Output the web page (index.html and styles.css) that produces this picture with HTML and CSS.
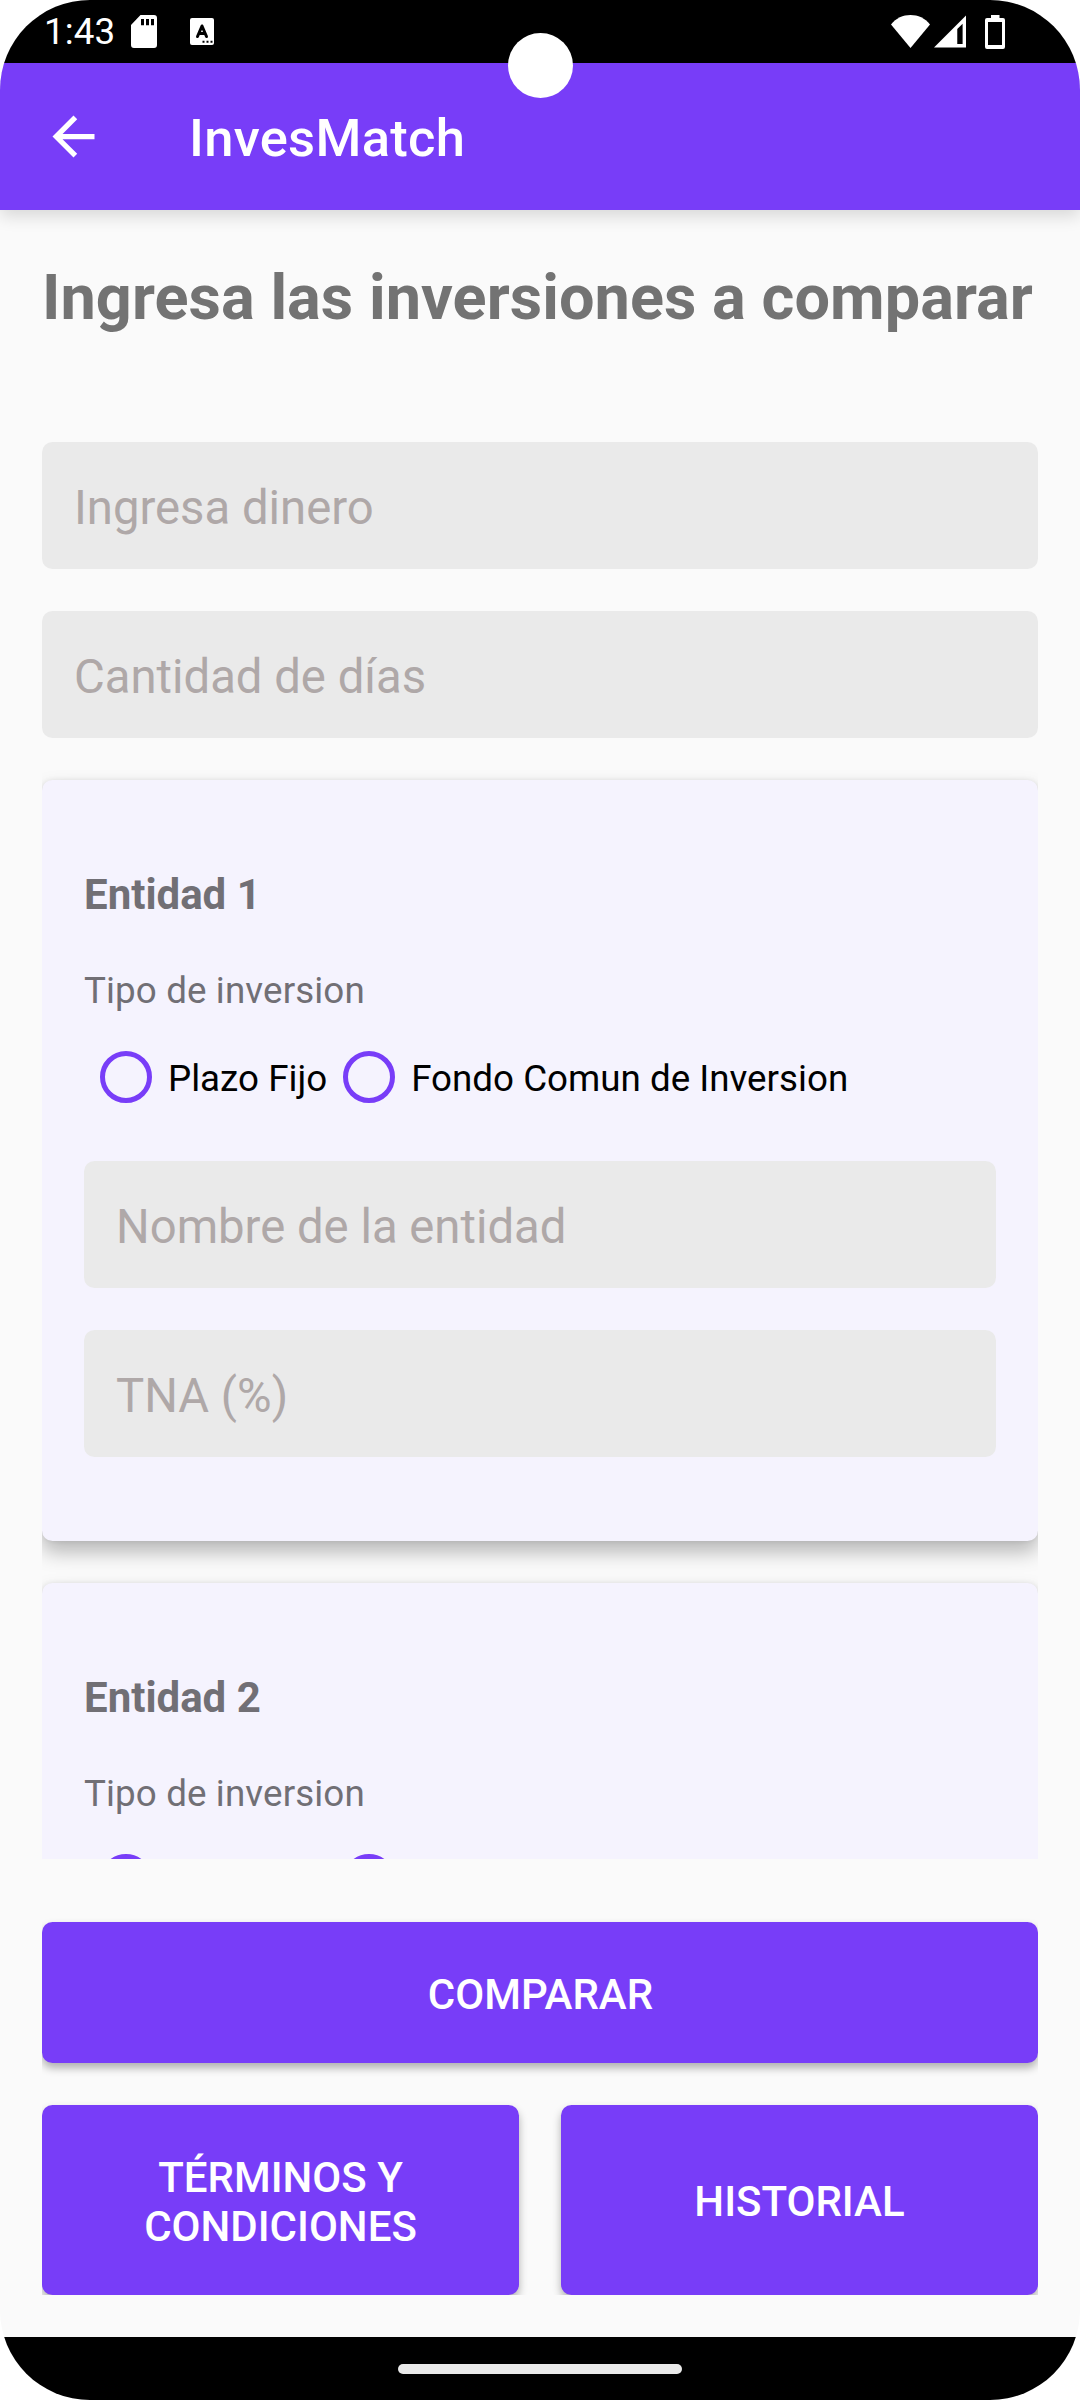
FILE: index.html
```html
<!DOCTYPE html>
<html lang="es">
<head>
<meta charset="utf-8">
<title>InvesMatch</title>
<link rel="stylesheet" href="styles.css">
</head>
<body>
<div class="screen">
  <header class="status-bar">
    <span class="clock">1:43</span>
    <svg class="icon-sd" viewBox="0 0 26 33"><path fill="#fff" fill-rule="evenodd" d="M9.5 0H23a3 3 0 0 1 3 3v27a3 3 0 0 1-3 3H3a3 3 0 0 1-3-3V10zM10 4v6.300h3V4zM15 4v6.300h3V4zM20 4v6.300h3V4z"/></svg>
    <svg class="icon-lang" viewBox="0 0 24 27"><rect width="24" height="27" rx="2" fill="#fff"/><path d="M7.500 18.500L12 8l4.500 10.500M9 15.500h6" fill="none" stroke="#000" stroke-width="3" stroke-linecap="round" stroke-linejoin="round"/><path d="M12.500 23.700h2m2 0h2m2 0h2" stroke="#000" stroke-width="2"/></svg>
    <span class="status-space"></span>
    <svg class="icon-wifi" viewBox="0 0 39 33"><path fill="#fff" d="M19.500 33L0 9.500C5 3 12 0 19.500 0S34 3 39 9.500z"/></svg>
    <svg class="icon-signal" viewBox="0 0 33 33"><path fill="#fff" fill-rule="evenodd" d="M33 0v33H0zM29.500 8.500L24 14v15.500h5.500z"/></svg>
    <svg class="icon-battery" viewBox="0 0 20 34"><path fill="#fff" fill-rule="evenodd" d="M6 0h8.500v3H18a2 2 0 0 1 2 2v27a2 2 0 0 1-2 2H2a2 2 0 0 1-2-2V5a2 2 0 0 1 2-2h4zM3 7v23h14V7z"/></svg>
  </header>
  <div class="camera"></div>

  <div class="app-bar">
    <svg class="back" viewBox="0 0 24 24"><path fill="#fff" d="M20 11H7.830l5.590-5.590L12 4l-8 8 8 8 1.410-1.410L7.830 13H20v-2z"/></svg>
    <span class="app-title">InvesMatch</span>
  </div>

  <main class="content">
    <div class="scroll">
      <h1 class="heading">Ingresa las inversiones a comparar</h1>
      <div class="field"><span>Ingresa dinero</span></div>
      <div class="field"><span>Cantidad de días</span></div>

      <section class="card">
        <h2 class="card-title">Entidad 1</h2>
        <p class="card-label">Tipo de inversion</p>
        <div class="radios">
          <div class="radio"><i class="ring"></i><span>Plazo Fijo</span></div>
          <div class="radio"><i class="ring"></i><span>Fondo Comun de Inversion</span></div>
        </div>
        <div class="card-fields">
          <div class="field"><span>Nombre de la entidad</span></div>
          <div class="field"><span>TNA (%)</span></div>
        </div>
      </section>

      <section class="card">
        <h2 class="card-title">Entidad 2</h2>
        <p class="card-label">Tipo de inversion</p>
        <div class="radios">
          <div class="radio"><i class="ring"></i></div>
          <div class="radio second"><i class="ring"></i></div>
        </div>
      </section>
    </div>

    <div class="actions">
      <div class="button main-action">COMPARAR</div>
      <div class="button-row">
        <div class="button">TÉRMINOS Y<br>CONDICIONES</div>
        <div class="button">HISTORIAL</div>
      </div>
    </div>
  </main>

  <footer class="nav-bar"><div class="handle"></div></footer>
</div>
</body>
</html>
```
FILE: styles.css
```css
* { box-sizing: border-box; }

body {
  margin: 0;
  background: #fff;
  font-family: Roboto, "Liberation Sans", sans-serif;
}

h1, h2, p { margin: 0; }
svg { display: block; flex: none; }

.screen {
  position: relative;
  display: flex;
  flex-direction: column;
  width: 1080px;
  height: 2400px;
  border-radius: 90px;
  overflow: hidden;
  background: #fafafa;
}

/* System status bar */
.status-bar {
  display: flex;
  align-items: center;
  height: 63px;
  padding: 0 75px 0 44px;
  background: #000;
  color: #fff;
}
.clock { width: 87px; font-size: 36.75px; line-height: 43px; letter-spacing: .1px; }
.icon-sd { width: 26px; height: 33px; }
.icon-lang { width: 24px; height: 27px; margin-left: 33px; }
.status-space { flex: 1; }
.icon-wifi { width: 39px; height: 33px; margin-right: 4px; }
.icon-signal { width: 32px; height: 33px; margin-right: 19px; }
.icon-battery { width: 20px; height: 34px; }

.camera {
  position: absolute;
  z-index: 3;
  left: 508px;
  top: 33px;
  width: 65px;
  height: 65px;
  border-radius: 50%;
  background: #fff;
}

/* App bar */
.app-bar {
  z-index: 2;
  display: flex;
  align-items: center;
  gap: 84px;
  height: 147px;
  padding: 0 42px;
  background: #783df8;
  color: #fff;
  box-shadow: 0 6px 16px rgba(0, 0, 0, .14);
}
.back { width: 63px; height: 63px; }
.app-title { font-size: 52.5px; font-weight: 500; line-height: 62px; letter-spacing: .3px; padding-top: 3px; }

/* Form */
.content {
  display: flex;
  flex-direction: column;
  height: 2127px;
  padding: 42px;
}
.scroll {
  display: flex;
  flex-direction: column;
  gap: 42px;
  height: 1607px;
  overflow: hidden;
}
.heading {
  flex: none;
  height: 148px;
  padding-top: 9px;
  font-size: 63px;
  font-weight: 700;
  line-height: 74px;
  letter-spacing: .05px;
  white-space: nowrap;
  color: #737373;
}
.field {
  display: flex;
  flex: none;
  align-items: center;
  height: 127px;
  padding: 4px 32px 0;
  border-radius: 10.5px;
  background: #eaeaea;
  font-size: 47.25px;
  color: #afa8a8;
}
.card {
  flex: none;
  height: 761px;
  padding: 84px 42px;
  border-radius: 10.5px;
  background: #f5f3fe;
  box-shadow: 0 11px 20px rgba(0, 0, 0, .27), 0 0 5px rgba(0, 0, 0, .08);
}
.card-title { padding-top: 6px; font-size: 42px; font-weight: 700; line-height: 49px; color: #716f75; }
.card-label { padding-top: 50px; font-size: 36.75px; line-height: 43px; letter-spacing: .12px; color: #716f75; }
.radios { display: flex; height: 84px; margin-top: 23px; }
.radio { display: flex; align-items: center; font-size: 36.75px; color: #000; }
.radio span { padding-top: 2px; }
.ring { width: 52px; height: 52px; margin: 0 16px; border: 5.25px solid #783df8; border-radius: 50%; }
.second { margin-left: 159px; }
.card-fields { display: flex; flex-direction: column; gap: 42px; margin-top: 42px; }

/* Bottom actions */
.actions {
  display: flex;
  flex-direction: column;
  gap: 42px;
  padding-top: 63px;
  overflow: hidden;
}
.button {
  display: flex;
  flex: 1;
  align-items: center;
  justify-content: center;
  padding-top: 3px;
  border-radius: 10.5px;
  background: #783df8;
  color: #fff;
  font-size: 42px;
  font-weight: 500;
  line-height: 49px;
  text-align: center;
  box-shadow: 0 5px 8px rgba(0, 0, 0, .3);
}
.main-action { flex: none; height: 141px; padding-left: 1px; }
.button-row { display: flex; gap: 42px; height: 190px; }

/* System navigation */
.nav-bar { flex: 1; padding-top: 27px; background: #000; }
.handle { width: 284px; height: 10px; margin: 0 auto; border-radius: 5px; background: #eaeaea; }
```
